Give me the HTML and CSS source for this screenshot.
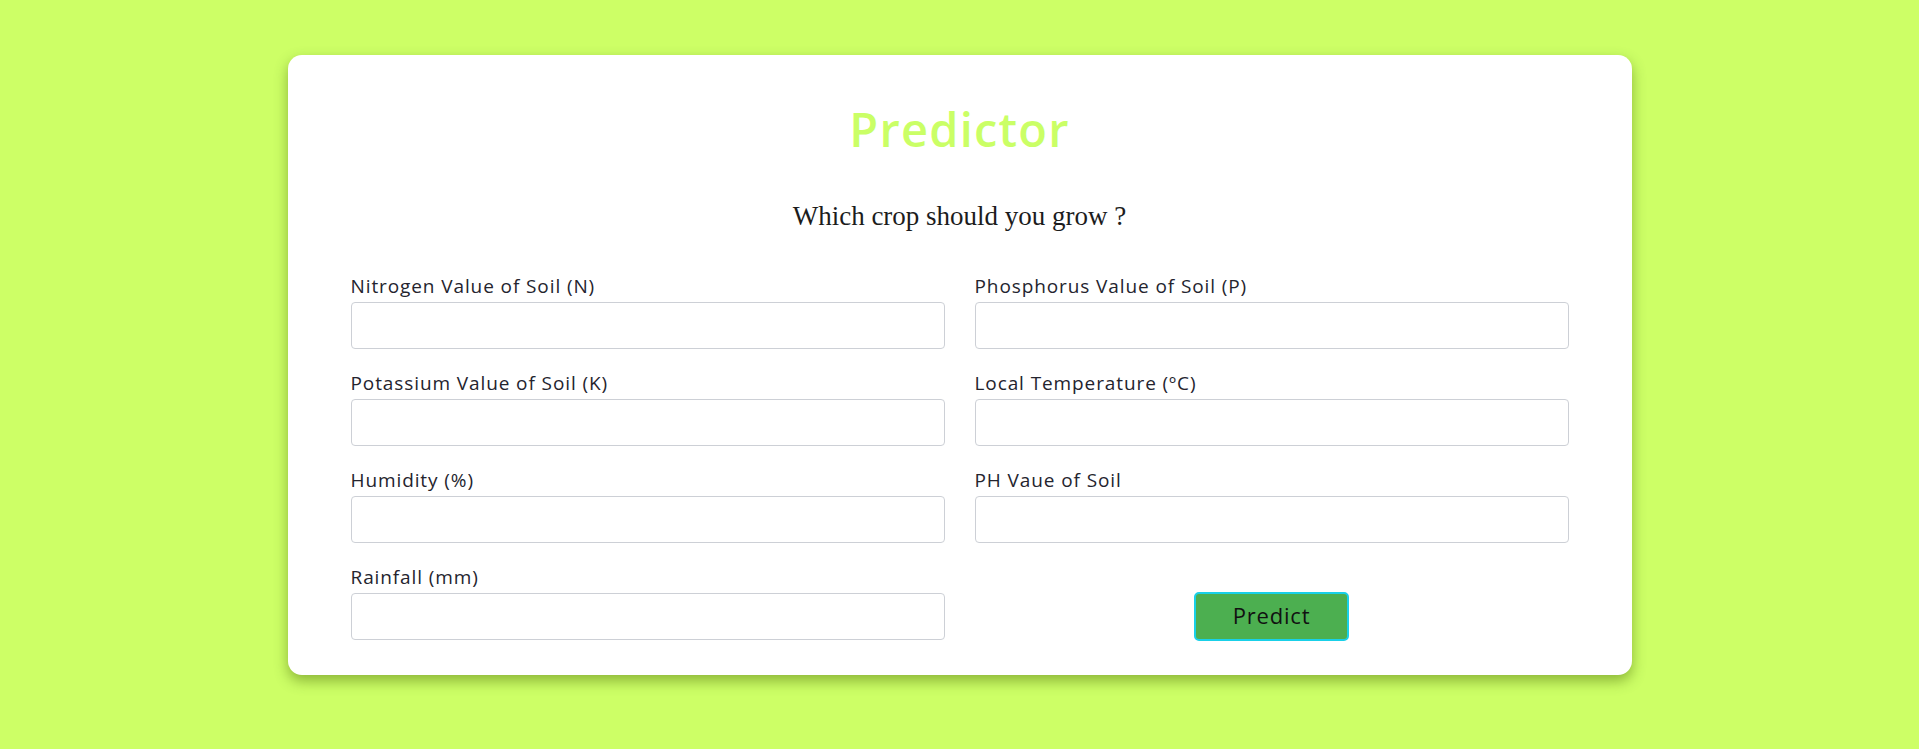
FILE: index.html
```html
<!DOCTYPE html>
<html lang="en">
<head>
<meta charset="utf-8">
<title>Predictor</title>
<link rel="stylesheet" href="styles.css">
</head>
<body>
<main class="page">
  <section class="card">
    <h1 class="title">Predictor</h1>
    <p class="subtitle">Which crop should you grow ?</p>
    <form class="form">
      <div class="field">
        <label class="label">Nitrogen Value of Soil (N)</label>
        <input class="input" type="text">
      </div>
      <div class="field">
        <label class="label">Phosphorus Value of Soil (P)</label>
        <input class="input" type="text">
      </div>
      <div class="field">
        <label class="label">Potassium Value of Soil (K)</label>
        <input class="input" type="text">
      </div>
      <div class="field">
        <label class="label">Local Temperature (ºC)</label>
        <input class="input" type="text">
      </div>
      <div class="field">
        <label class="label">Humidity (%)</label>
        <input class="input" type="text">
      </div>
      <div class="field">
        <label class="label">PH Vaue of Soil</label>
        <input class="input" type="text">
      </div>
      <div class="field">
        <label class="label">Rainfall (mm)</label>
        <input class="input" type="text">
      </div>
      <div class="action">
        <button class="button" type="button">Predict</button>
      </div>
    </form>
  </section>
</main>
</body>
</html>
```

FILE: styles.css
```css
* { box-sizing: border-box; }

body {
  margin: 0;
  background: #cdff66;
  font-family: "Open Sans", "Liberation Sans", sans-serif;
}

.page {
  padding-top: 55px;
  min-height: 749px;
}

.card {
  width: 1344px;
  margin: 0 auto;
  background: #ffffff;
  border-radius: 14px;
  box-shadow: 0 6px 14px rgba(60, 90, 0, 0.45);
  padding: 45px 63px 35px;
}

.title {
  margin: 0;
  text-align: center;
  font-size: 47px;
  line-height: 58px;
  font-weight: 600;
  color: #caff66;
  letter-spacing: 1.2px;
}

.subtitle {
  margin: 43px 0 0;
  text-align: center;
  font-family: "Liberation Serif", "Times New Roman", serif;
  font-size: 27px;
  line-height: 30px;
  color: #1c1c1c;
}

.form {
  margin-top: 43px;
  display: grid;
  grid-template-columns: 1fr 1fr;
  column-gap: 30px;
  row-gap: 22px;
}

.field {
  display: flex;
  flex-direction: column;
}

.label {
  font-size: 19px;
  line-height: 24px;
  letter-spacing: 0.9px;
  color: #24242e;
  margin-bottom: 4px;
}

.input {
  height: 47px;
  border: 1px solid #cdd0d6;
  border-radius: 4px;
  background: #fff;
  font: inherit;
}

.action {
  display: flex;
  justify-content: center;
  align-items: flex-end;
}

.button {
  width: 155px;
  height: 49px;
  margin-bottom: -1px;
  padding: 0 0 4px;
  background: #4caf50;
  border: 2px solid #19d0e8;
  border-radius: 5px;
  color: #111;
  font-family: "Open Sans", "Liberation Sans", sans-serif;
  font-size: 22px;
  letter-spacing: 0.8px;
}
```
